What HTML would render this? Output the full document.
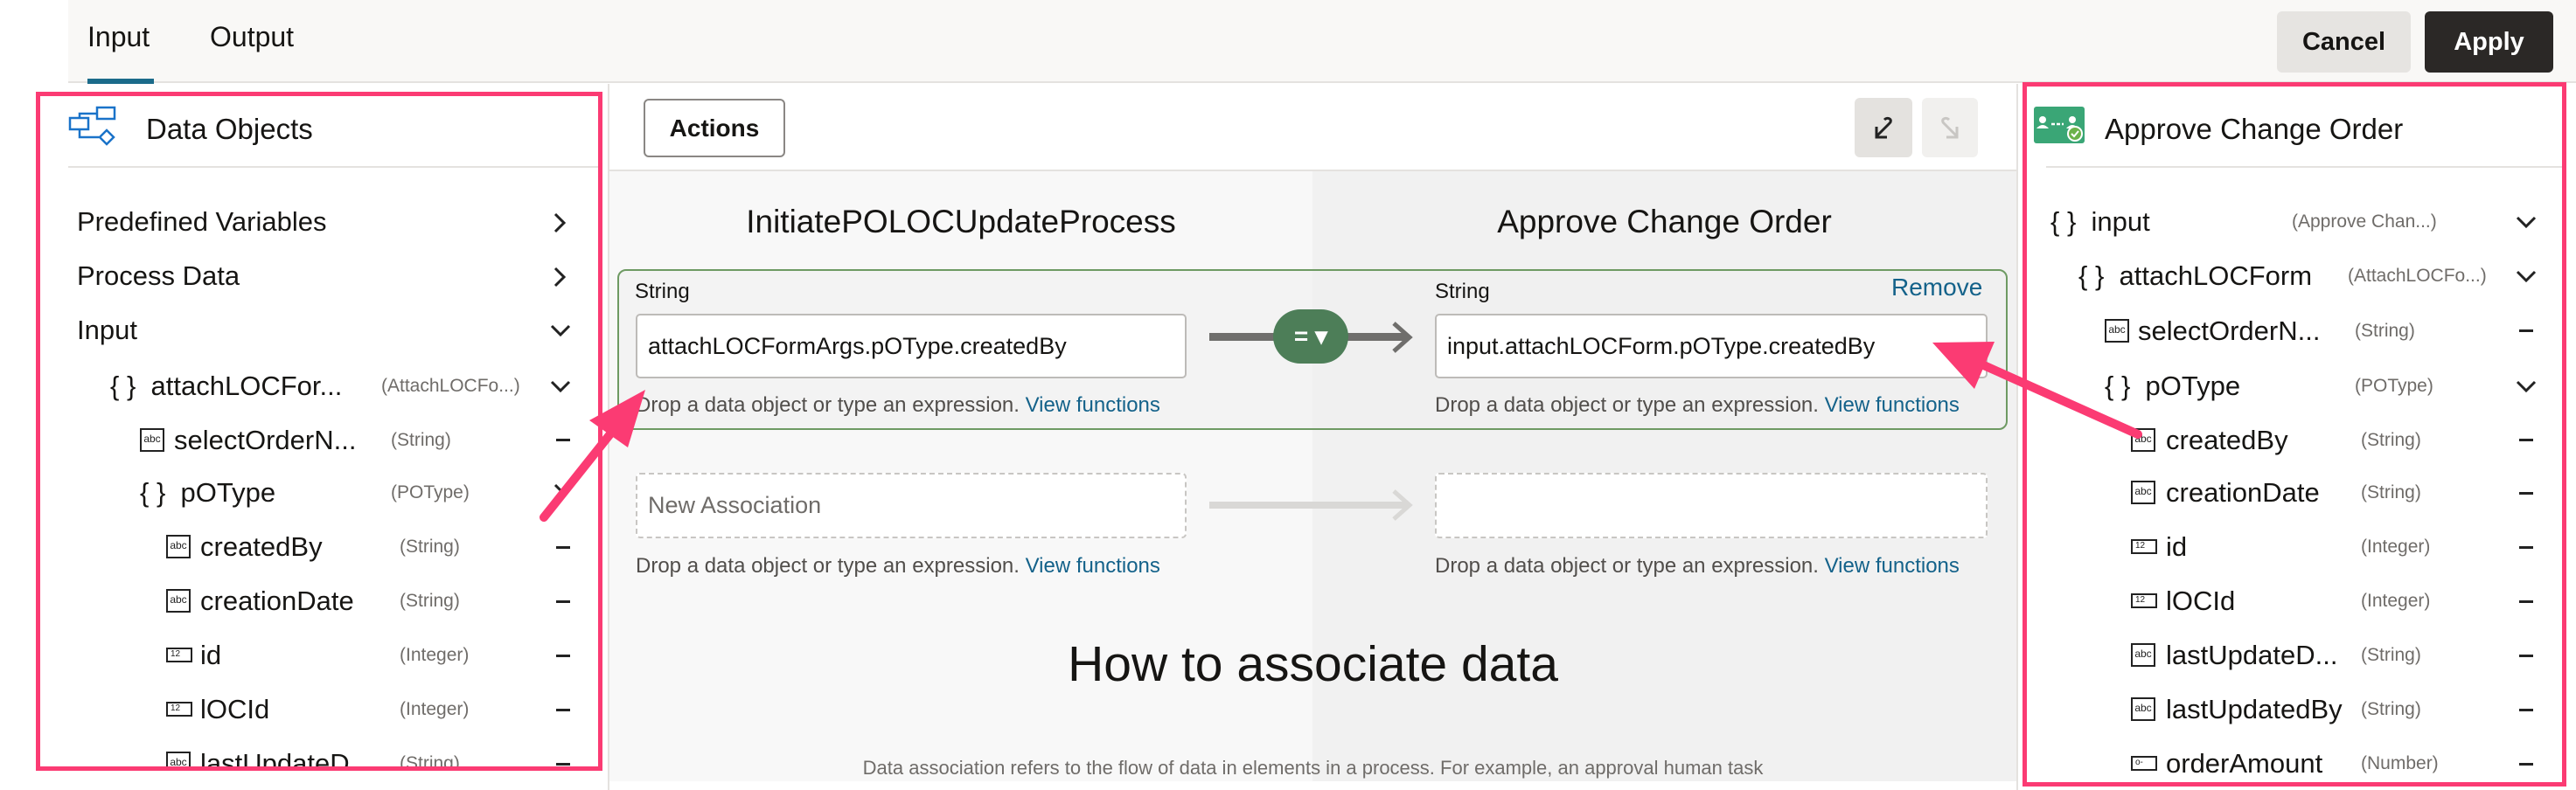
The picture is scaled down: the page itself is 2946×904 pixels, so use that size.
<!DOCTYPE html>
<html><head><meta charset="utf-8"><style>
*{box-sizing:border-box;margin:0;padding:0}
body{width:2946px;height:904px;overflow:hidden;background:#fff;font-family:"Liberation Sans",sans-serif;color:#161513;position:relative}
.a{position:absolute;white-space:nowrap}
.r{position:absolute;height:50px;line-height:50px;font-size:31px;white-space:nowrap}
.t{position:absolute;height:50px;line-height:50px;font-size:21px;color:#6f6c69;white-space:nowrap}
.ic{position:absolute;width:28px;height:27px;border:2.5px solid #222;font-size:12px;line-height:21px;text-align:center;color:#222}
.ic12{position:absolute;width:30px;height:17px;border:2.5px solid #222;font-size:10px;line-height:12px;padding-left:3px;text-align:left;color:#222}
.dash{position:absolute;width:16px;height:3px;background:#222}
.small{font-size:24px;color:#514e4b}
.link{color:#14628a}
</style></head><body>
<!-- top bar -->
<div class="a" style="left:78px;top:0;width:2868px;height:95px;background:#f9f8f6;border-bottom:2px solid #e4e2df"></div>
<div class="a" style="left:100px;top:20px;font-size:32px;line-height:44px">Input</div>
<div class="a" style="left:240px;top:20px;font-size:32px;line-height:44px">Output</div>
<div class="a" style="left:100px;top:90px;width:76px;height:6px;background:#1b6b8a"></div>
<div class="a" style="left:2604px;top:13px;width:153px;height:70px;background:#e6e4e1;border-radius:6px;font-size:29px;font-weight:bold;line-height:70px;text-align:center">Cancel</div>
<div class="a" style="left:2773px;top:13px;width:147px;height:70px;background:#2b2826;border-radius:6px;font-size:29px;font-weight:bold;line-height:70px;text-align:center;color:#fff">Apply</div>

<!-- center area -->
<div class="a" style="left:695px;top:96px;width:2px;height:808px;background:#e4e2df"></div>
<div class="a" style="left:2306px;top:96px;width:2px;height:808px;background:#e4e2df"></div>
<div class="a" style="left:697px;top:194px;width:1609px;height:2px;background:#e4e2df"></div>
<div class="a" style="left:697px;top:196px;width:804px;height:698px;background:#f8f8f8"></div>
<div class="a" style="left:1501px;top:196px;width:805px;height:698px;background:#f1f1f1"></div>
<div class="a" style="left:736px;top:113px;width:162px;height:67px;border:2px solid #8a8784;border-radius:6px;font-size:28px;font-weight:bold;line-height:63px;text-align:center">Actions</div>
<div class="a" style="left:2121px;top:112px;width:66px;height:68px;background:#e4e2df;border-radius:6px"></div>
<div class="a" style="left:2198px;top:112px;width:64px;height:68px;background:#f1f0ee;border-radius:6px"></div>
<svg class="a" style="left:2137px;top:130px" width="34" height="34" viewBox="0 0 34 34"><path d="M9 26 L24 11 C28 7 22 3 18 7" fill="none" stroke="#222" stroke-width="3"/><path d="M9 15 V27 H21" fill="none" stroke="#222" stroke-width="3"/></svg>
<svg class="a" style="left:2213px;top:130px" width="34" height="34" viewBox="0 0 34 34"><path d="M25 26 L10 11 C6 7 12 3 16 7" fill="none" stroke="#c8c6c3" stroke-width="3"/><path d="M25 15 V27 H13" fill="none" stroke="#c8c6c3" stroke-width="3"/></svg>

<div class="a" style="left:697px;top:228px;width:804px;text-align:center;font-size:37px;line-height:52px">InitiatePOLOCUpdateProcess</div>
<div class="a" style="left:1501px;top:228px;width:805px;text-align:center;font-size:37px;line-height:52px">Approve Change Order</div>

<div class="a" style="left:706px;top:308px;width:1590px;height:184px;border:2px solid #6e9a63;border-radius:10px;background:rgba(240,240,240,0.6)"></div>
<div class="a small" style="left:726px;top:318px;line-height:32px;color:#161513">String</div>
<div class="a small" style="left:1641px;top:318px;line-height:32px;color:#161513">String</div>
<div class="a" style="left:2163px;top:311px;font-size:28px;line-height:36px;color:#14628a">Remove</div>
<div class="a" style="left:727px;top:359px;width:630px;height:74px;background:#fff;border:2px solid #bdbbb8;border-radius:5px;font-size:27px;line-height:70px;padding-left:12px">attachLOCFormArgs.pOType.createdBy</div>
<div class="a" style="left:1641px;top:359px;width:632px;height:74px;background:#fff;border:2px solid #bdbbb8;border-radius:5px;font-size:27px;line-height:70px;padding-left:12px">input.attachLOCForm.pOType.createdBy</div>
<div class="a small" style="left:727px;top:448px;line-height:32px">Drop a data object or type an expression. <span class="link">View functions</span></div>
<div class="a small" style="left:1641px;top:448px;line-height:32px">Drop a data object or type an expression. <span class="link">View functions</span></div>
<div class="a" style="left:1383px;top:381px;width:226px;height:9px;background:#6f6e6c"></div>
<svg class="a" style="left:1588px;top:366px" width="30" height="40" viewBox="0 0 30 40"><path d="M6 4 L24 20 L6 36" fill="none" stroke="#6f6e6c" stroke-width="5"/></svg>
<div class="a" style="left:1456px;top:354px;width:86px;height:62px;background:#4d7e58;border-radius:31px;color:#fff;font-size:28px;font-weight:bold;line-height:62px;text-align:center">= ▾</div>

<div class="a" style="left:727px;top:541px;width:630px;height:75px;background:#fff;border:2px dashed #c8c6c3;border-radius:5px;font-size:27px;line-height:71px;padding-left:12px;color:#6f6c69">New Association</div>
<div class="a" style="left:1641px;top:541px;width:632px;height:75px;background:#fff;border:2px dashed #c8c6c3;border-radius:5px"></div>
<div class="a" style="left:1383px;top:574px;width:226px;height:8px;background:#d9d8d6"></div>
<svg class="a" style="left:1588px;top:558px" width="30" height="40" viewBox="0 0 30 40"><path d="M6 4 L24 20 L6 36" fill="none" stroke="#d9d8d6" stroke-width="5"/></svg>
<div class="a small" style="left:727px;top:632px;line-height:32px">Drop a data object or type an expression. <span class="link">View functions</span></div>
<div class="a small" style="left:1641px;top:632px;line-height:32px">Drop a data object or type an expression. <span class="link">View functions</span></div>

<div class="a" style="left:697px;top:728px;width:1609px;text-align:center;font-size:57px;line-height:64px">How to associate data</div>
<div class="a" style="left:697px;top:862px;width:1609px;height:32px;overflow:hidden;text-align:center;font-size:22px;line-height:34px;color:#6f6c69">Data association refers to the flow of data in elements in a process. For example, an approval human task</div>

<!-- left panel -->
<div class="a" style="left:41px;top:105px;width:648px;height:776px;overflow:hidden">
 <div style="position:absolute;left:0;top:0;width:648px;height:776px;transform:translate(-41px,-105px)">
 <svg class="a" style="left:78px;top:120px" width="56" height="48" viewBox="78 120 56 48"><rect x="80" y="135" width="21" height="13" fill="#fff" stroke="#1a73c9" stroke-width="2.5"/><rect x="111" y="123" width="20" height="13" fill="#fff" stroke="#1a73c9" stroke-width="2.5"/><path d="M91 135 V130 H111 M91 148 V157 H113" fill="none" stroke="#1a73c9" stroke-width="2.5"/><path d="M122 149 L130 157 L122 165 L114 157Z" fill="#fff" stroke="#1a73c9" stroke-width="2.5"/></svg>
 <div class="a" style="left:167px;top:126px;font-size:33px;line-height:44px">Data Objects</div>
 <div class="a" style="left:78px;top:190px;width:606px;height:2px;background:#e4e2df"></div>
 <div class="r" style="left:88px;top:229px">Predefined Variables</div>
 <svg class="a" style="left:628px;top:242px" width="24" height="26"><path d="M7 3 L17 13 L7 23" fill="none" stroke="#222" stroke-width="3"/></svg>
 <div class="r" style="left:88px;top:291px">Process Data</div>
 <svg class="a" style="left:628px;top:304px" width="24" height="26"><path d="M7 3 L17 13 L7 23" fill="none" stroke="#222" stroke-width="3"/></svg>
 <div class="r" style="left:88px;top:353px">Input</div>
 <svg class="a" style="left:628px;top:366px" width="26" height="24"><path d="M3 7 L13 17 L23 7" fill="none" stroke="#222" stroke-width="3"/></svg>
 <div class="r" style="left:126px;top:417px">{ } &nbsp;attachLOCFor...</div>
 <div class="t" style="left:436px;top:417px">(AttachLOCFo...)</div>
 <svg class="a" style="left:628px;top:430px" width="26" height="24"><path d="M3 7 L13 17 L23 7" fill="none" stroke="#222" stroke-width="3"/></svg>
 <div class="ic" style="left:160px;top:490px">abc</div>
 <div class="r" style="left:199px;top:479px">selectOrderN...</div>
 <div class="t" style="left:447px;top:479px">(String)</div>
 <div class="dash" style="left:636px;top:502px"></div>
 <div class="r" style="left:160px;top:539px">{ } &nbsp;pOType</div>
 <div class="t" style="left:447px;top:539px">(POType)</div>
 <svg class="a" style="left:628px;top:552px" width="24" height="26"><path d="M7 3 L17 13 L7 23" fill="none" stroke="#222" stroke-width="3"/></svg>
 <div class="ic" style="left:190px;top:612px">abc</div><div class="r" style="left:229px;top:601px">createdBy</div><div class="t" style="left:457px;top:601px">(String)</div><div class="dash" style="left:636px;top:625px"></div>
 <div class="ic" style="left:190px;top:674px">abc</div><div class="r" style="left:229px;top:663px">creationDate</div><div class="t" style="left:457px;top:663px">(String)</div><div class="dash" style="left:636px;top:687px"></div>
 <div class="ic12" style="left:190px;top:741px">12</div><div class="r" style="left:229px;top:725px">id</div><div class="t" style="left:457px;top:725px">(Integer)</div><div class="dash" style="left:636px;top:749px"></div>
 <div class="ic12" style="left:190px;top:803px">12</div><div class="r" style="left:229px;top:787px">lOCId</div><div class="t" style="left:457px;top:787px">(Integer)</div><div class="dash" style="left:636px;top:811px"></div>
 <div class="ic" style="left:190px;top:860px">abc</div><div class="r" style="left:229px;top:849px">lastUpdateD...</div><div class="t" style="left:457px;top:849px">(String)</div><div class="dash" style="left:636px;top:873px"></div>
 </div>
</div>
<div class="a" style="left:41px;top:105px;width:648px;height:777px;border:5px solid #fb3b73"></div>

<!-- right panel -->
<div class="a" style="left:2313px;top:94px;width:622px;height:806px;overflow:hidden">
 <div style="position:absolute;left:0;top:0;width:622px;height:806px;transform:translate(-2313px,-94px)">
 <svg class="a" style="left:2326px;top:122px" width="60" height="44" viewBox="0 0 60 44"><rect x="0" y="0" width="58" height="42" rx="3" fill="#3aa676"/><circle cx="10" cy="15" r="4" fill="#fff"/><path d="M3 25 Q10 17 17 25Z" fill="#fff"/><path d="M20 20 H34" stroke="#fff" stroke-width="2.5" stroke-dasharray="4 2"/><circle cx="44" cy="15" r="4" fill="#fff"/><path d="M37 25 Q44 17 51 25Z" fill="#fff"/><circle cx="47" cy="31" r="8" fill="#6cb24a" stroke="#fff" stroke-width="2"/><path d="M43 31 L46 34 L51 28" fill="none" stroke="#fff" stroke-width="2"/></svg>
 <div class="a" style="left:2407px;top:126px;font-size:33px;line-height:44px">Approve Change Order</div>
 <div class="a" style="left:2340px;top:190px;width:592px;height:2px;background:#e4e2df"></div>
 <div class="r" style="left:2345px;top:229px">{ } &nbsp;input</div><div class="t" style="left:2621px;top:229px">(Approve Chan...)</div>
 <svg class="a" style="left:2876px;top:242px" width="26" height="24"><path d="M3 7 L13 17 L23 7" fill="none" stroke="#222" stroke-width="3"/></svg>
 <div class="r" style="left:2377px;top:291px">{ } &nbsp;attachLOCForm</div><div class="t" style="left:2685px;top:291px">(AttachLOCFo...)</div>
 <svg class="a" style="left:2876px;top:304px" width="26" height="24"><path d="M3 7 L13 17 L23 7" fill="none" stroke="#222" stroke-width="3"/></svg>
 <div class="ic" style="left:2407px;top:365px">abc</div><div class="r" style="left:2445px;top:354px">selectOrderN...</div><div class="t" style="left:2693px;top:354px">(String)</div><div class="dash" style="left:2881px;top:377px"></div>
 <div class="r" style="left:2407px;top:417px">{ } &nbsp;pOType</div><div class="t" style="left:2693px;top:417px">(POType)</div>
 <svg class="a" style="left:2876px;top:430px" width="26" height="24"><path d="M3 7 L13 17 L23 7" fill="none" stroke="#222" stroke-width="3"/></svg>
 <div class="ic" style="left:2437px;top:490px">abc</div><div class="r" style="left:2477px;top:479px">createdBy</div><div class="t" style="left:2700px;top:479px">(String)</div><div class="dash" style="left:2881px;top:502px"></div>
 <div class="ic" style="left:2437px;top:550px">abc</div><div class="r" style="left:2477px;top:539px">creationDate</div><div class="t" style="left:2700px;top:539px">(String)</div><div class="dash" style="left:2881px;top:563px"></div>
 <div class="ic12" style="left:2437px;top:617px">12</div><div class="r" style="left:2477px;top:601px">id</div><div class="t" style="left:2700px;top:601px">(Integer)</div><div class="dash" style="left:2881px;top:625px"></div>
 <div class="ic12" style="left:2437px;top:679px">12</div><div class="r" style="left:2477px;top:663px">lOCId</div><div class="t" style="left:2700px;top:663px">(Integer)</div><div class="dash" style="left:2881px;top:687px"></div>
 <div class="ic" style="left:2437px;top:736px">abc</div><div class="r" style="left:2477px;top:725px">lastUpdateD...</div><div class="t" style="left:2700px;top:725px">(String)</div><div class="dash" style="left:2881px;top:749px"></div>
 <div class="ic" style="left:2437px;top:798px">abc</div><div class="r" style="left:2477px;top:787px">lastUpdatedBy</div><div class="t" style="left:2700px;top:787px">(String)</div><div class="dash" style="left:2881px;top:811px"></div>
 <div class="ic12" style="left:2437px;top:865px">o-</div><div class="r" style="left:2477px;top:849px">orderAmount</div><div class="t" style="left:2700px;top:849px">(Number)</div><div class="dash" style="left:2881px;top:873px"></div>
 </div>
</div>
<div class="a" style="left:2313px;top:94px;width:622px;height:806px;border:5px solid #fb3b73"></div>

<!-- pink arrows -->
<svg class="a" style="left:0;top:0" width="2946" height="904">
 <path d="M622 592 L700 494" stroke="#fb3b73" stroke-width="10" fill="none" stroke-linecap="round"/>
 <path d="M738 446 L674 481 L718 512Z" fill="#fb3b73"/>
 <path d="M2445 497 L2262 415" stroke="#fb3b73" stroke-width="10" fill="none" stroke-linecap="round"/>
 <path d="M2210 392 L2281 391 L2258 445Z" fill="#fb3b73"/>
</svg>
</body></html>
